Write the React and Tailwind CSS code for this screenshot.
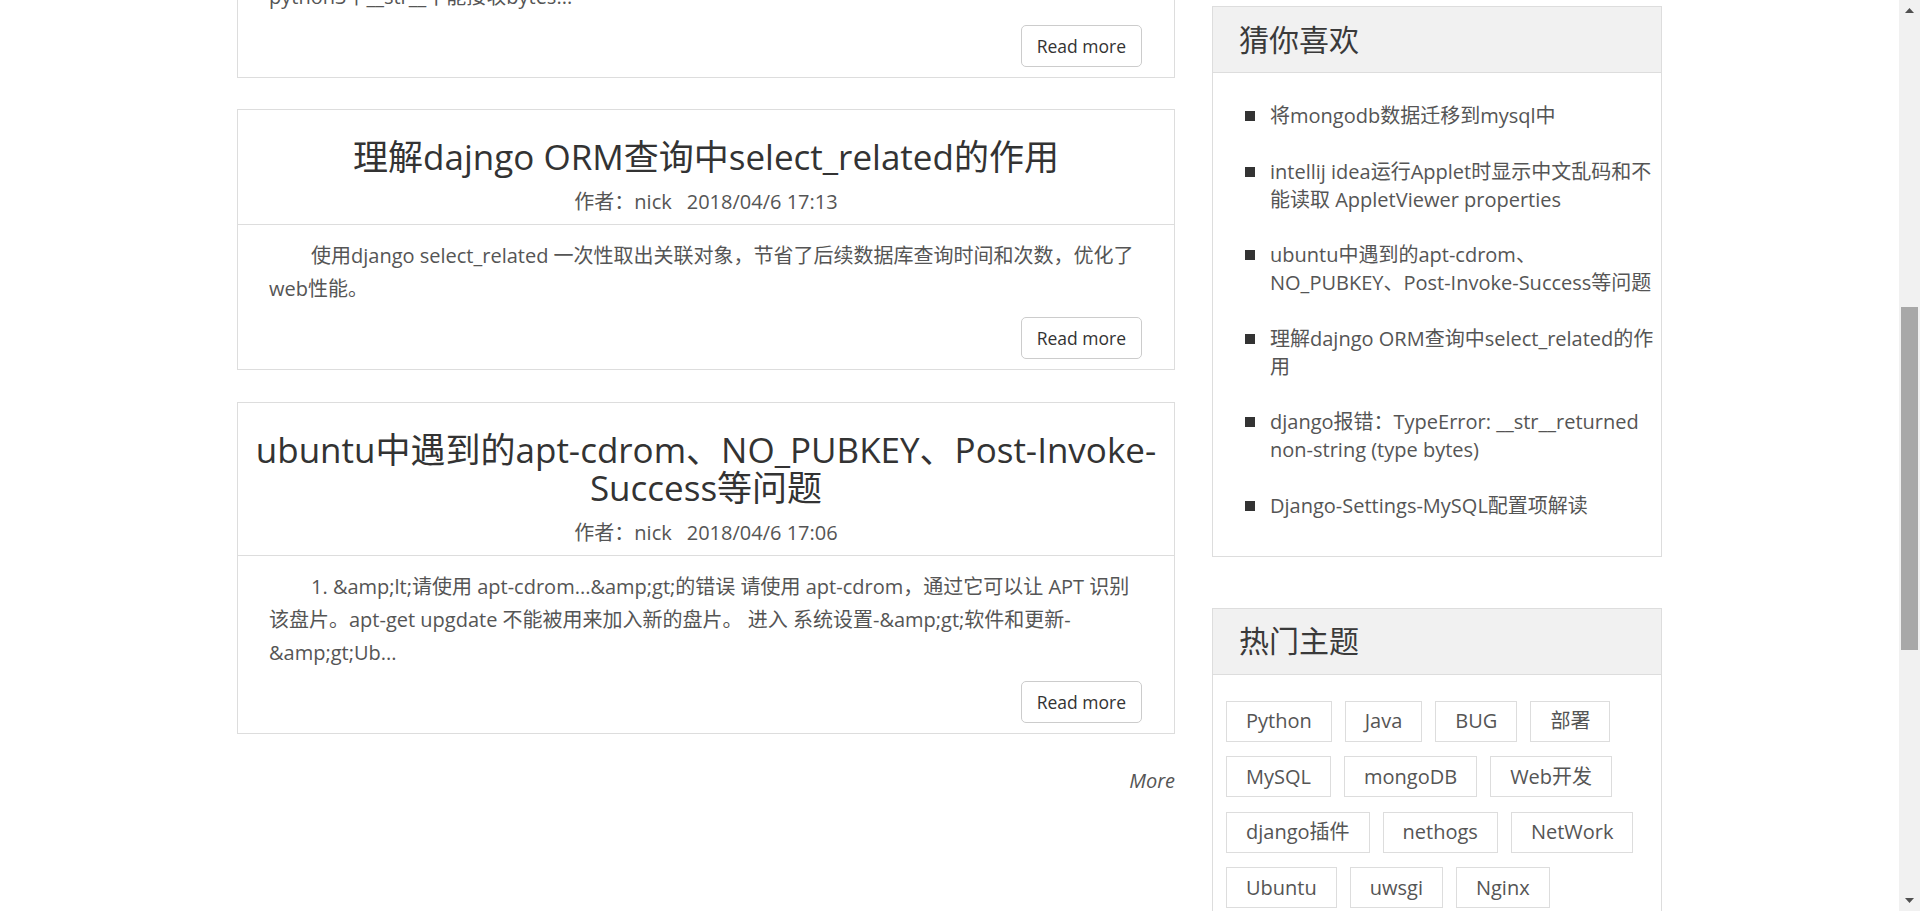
import React from "react";

/* ================= DATA ================= */

const posts = [
{
title:"理解dajngo ORM查询中select_related的作用",
author:"nick",
date:"2018/04/6 17:13",
summary:"使用django select_related 一次性取出关联对象，节省了后续数据库查询时间和次数，优化了web性能。"
},
{
title:"ubuntu中遇到的apt-cdrom、NO_PUBKEY、Post-Invoke-Success等问题",
author:"nick",
date:"2018/04/6 17:06",
summary:"1. &amp;lt;请使用 apt-cdrom...&amp;gt;的错误 请使用 apt-cdrom，通过它可以让 APT 识别该盘片。apt-get upgdate 不能被用来加入新的盘片。 进入 系统设置-&amp;gt;软件和更新-&amp;gt;Ub..."
}
];

const guesses = [
"将mongodb数据迁移到mysql中",
"intellij idea运行Applet时显示中文乱码和不能读取 AppletViewer properties",
"ubuntu中遇到的apt-cdrom、NO_PUBKEY、Post-Invoke-Success等问题",
"理解dajngo ORM查询中select_related的作用",
"django报错：TypeError: __str__returned non-string (type bytes)",
"Django-Settings-MySQL配置项解读"
];

const tags = [
"Python","Java","BUG","部署",
"MySQL","mongoDB","Web开发",
"django插件","nethogs","NetWork",
"Ubuntu","uwsgi","Nginx"
];

/* ================= SMALL PARTS ================= */

function ReadMore(){
return(
<button className="h-[42px] rounded-[5px] border border-[#ccc] bg-white px-[15px] text-[17.5px] text-[#333]">
Read more
</button>
);
}

function PostCard({post}){
return(
<div className="border border-[#ddd] bg-white">

<div className="border-b border-[#ddd] px-[13px] pt-[28px] pb-[8px] text-center">
<h2 className="text-[35px] leading-[38px] text-[#333]">{post.title}</h2>
<p className="mt-[12px] text-[20px] leading-[28px] text-[#555]">
作者：{post.author}<span className="ml-[15px]">{post.date}</span>
</p>
</div>

<div className="pl-[31px] pr-[32px] pt-[14px] pb-[10px]">
<p className="indent-[42px] text-[20px] leading-[33px] text-[#555]">{post.summary}</p>
<div className="mt-[12px] flex justify-end">
<ReadMore/>
</div>
</div>

</div>
);
}

function PanelHead({children}){
return(
<div className="flex h-[66px] items-center border-b border-[#ddd] bg-[#f1f1f1] px-[26px]">
<h3 className="text-[30px] leading-none text-[#3a3a3a]">{children}</h3>
</div>
);
}

function Arrow({down}){
return(
<div className="flex h-[21px] items-center justify-center">
<svg width="9" height="5" viewBox="0 0 9 5">
{down
? <path d="M0 0H9L4.5 5Z" fill="#505050"/>
: <path d="M0 5H9L4.5 0Z" fill="#505050"/>}
</svg>
</div>
);
}

/* ================= PAGE ================= */

export default function App(){

return(
<div className="flex h-[911px] w-[1920px] overflow-hidden bg-white font-['Open_Sans','Noto_Sans_CJK_SC',sans-serif]">

<main className="min-w-0 flex-1 overflow-hidden">
<div className="mx-auto flex w-[1425px] items-start gap-[37px]">

{/* POSTS */}

<div className="w-[938px] shrink-0">

{/* tail of the previous post, scrolled mostly out of view */}
<div className="-mt-[34px] border-x border-b border-[#ddd] pl-[31px] pr-[32px] pt-[14px] pb-[10px]">
<p className="text-[20px] leading-[33px] text-[#555]">python3中__str__不能接收bytes...</p>
<div className="mt-[12px] flex justify-end">
<ReadMore/>
</div>
</div>

<div className="mt-[31px] flex flex-col gap-[32px]">
{posts.map(p=>(
<PostCard key={p.title} post={p}/>
))}
</div>

<div className="mt-[33px] text-right text-[20px] italic leading-[28px] text-[#555]">
More
</div>

</div>

{/* SIDEBAR */}

<aside className="w-[450px] shrink-0 pt-[6px]">

<section className="border border-[#ddd]">
<PanelHead>猜你喜欢</PanelHead>
<ul className="flex flex-col gap-[27.6px] pl-[32px] pr-[5px] pt-[29px] pb-[36px]">
{guesses.map(g=>(
<li key={g} className="flex gap-[15px] text-[20px] leading-[28px] text-[#555]">
<span className="mt-[9px] size-[10px] shrink-0 bg-[#333]"></span>
<span>{g}</span>
</li>
))}
</ul>
</section>

<section className="mt-[51px] border border-[#ddd]">
<PanelHead>热门主题</PanelHead>
<div className="flex flex-wrap gap-x-[13px] gap-y-[14.5px] pl-[13px] pr-[13px] pt-[26px] pb-[20px]">
{tags.map(t=>(
<span key={t} className="flex h-[41px] items-center border border-[#ddd] px-[19px] text-[20px] text-[#555]">
{t}
</span>
))}
</div>
</section>

</aside>

</div>
</main>

{/* SCROLLBAR */}

<div className="flex w-[21px] shrink-0 flex-col bg-[#f1f1f1]">
<Arrow/>
<div className="h-[286px]"></div>
<div className="mx-[2px] h-[343px] bg-[#a8a8a8]"></div>
<div className="flex-1"></div>
<Arrow down/>
</div>

</div>
);

}
